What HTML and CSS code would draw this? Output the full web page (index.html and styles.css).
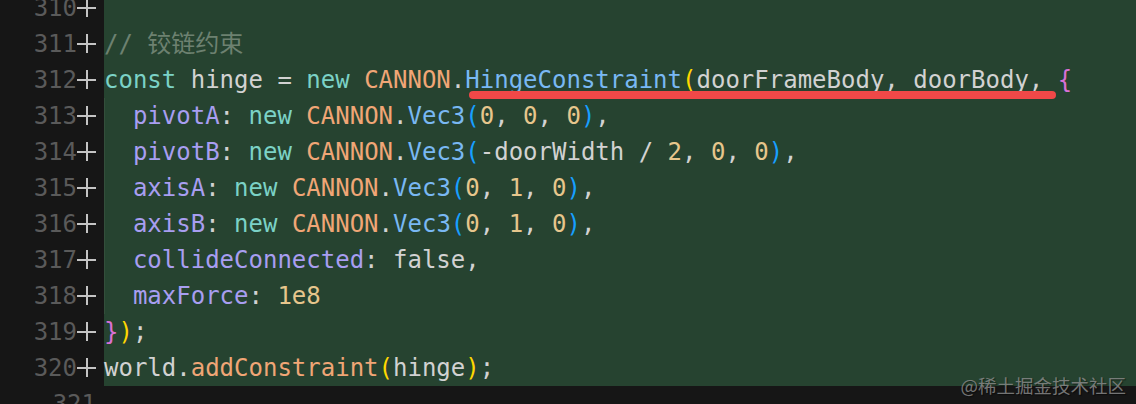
FILE: index.html
```html
<!DOCTYPE html>
<html lang="zh">
<head>
<meta charset="utf-8">
<title>diff</title>
<link rel="stylesheet" href="styles.css">
</head>
<body>
<div class="editor">
  <div class="line add"><div class="gutter"><span class="num">310</span><span class="plus"></span></div><div class="code"> </div></div>
  <div class="line add"><div class="gutter"><span class="num">311</span><span class="plus"></span></div><div class="code"><span class="cm">// 铰链约束</span></div></div>
  <div class="line add"><div class="gutter"><span class="num">312</span><span class="plus"></span></div><div class="code"><span class="kw">const</span> <span class="id">hinge</span> <span class="p">=</span> <span class="kw">new</span> <span class="ns">CANNON</span><span class="p">.</span><span class="marked"><span class="fn">HingeConstraint</span><span class="b1">(</span><span class="id">doorFrameBody</span><span class="p">,</span> <span class="id">doorBody</span><span class="p">,</span> </span><span class="b2">{</span></div></div>
  <div class="line add guide"><div class="gutter"><span class="num">313</span><span class="plus"></span></div><div class="code">  <span class="prop">pivotA</span><span class="p">:</span> <span class="kw">new</span> <span class="ns">CANNON</span><span class="p">.</span><span class="fn">Vec3</span><span class="b3">(</span><span class="nm">0</span><span class="p">,</span> <span class="nm">0</span><span class="p">,</span> <span class="nm">0</span><span class="b3">)</span><span class="p">,</span></div></div>
  <div class="line add guide"><div class="gutter"><span class="num">314</span><span class="plus"></span></div><div class="code">  <span class="prop">pivotB</span><span class="p">:</span> <span class="kw">new</span> <span class="ns">CANNON</span><span class="p">.</span><span class="fn">Vec3</span><span class="b3">(</span><span class="id">-doorWidth</span> <span class="p">/</span> <span class="nm">2</span><span class="p">,</span> <span class="nm">0</span><span class="p">,</span> <span class="nm">0</span><span class="b3">)</span><span class="p">,</span></div></div>
  <div class="line add guide"><div class="gutter"><span class="num">315</span><span class="plus"></span></div><div class="code">  <span class="prop">axisA</span><span class="p">:</span> <span class="kw">new</span> <span class="ns">CANNON</span><span class="p">.</span><span class="fn">Vec3</span><span class="b3">(</span><span class="nm">0</span><span class="p">,</span> <span class="nm">1</span><span class="p">,</span> <span class="nm">0</span><span class="b3">)</span><span class="p">,</span></div></div>
  <div class="line add guide"><div class="gutter"><span class="num">316</span><span class="plus"></span></div><div class="code">  <span class="prop">axisB</span><span class="p">:</span> <span class="kw">new</span> <span class="ns">CANNON</span><span class="p">.</span><span class="fn">Vec3</span><span class="b3">(</span><span class="nm">0</span><span class="p">,</span> <span class="nm">1</span><span class="p">,</span> <span class="nm">0</span><span class="b3">)</span><span class="p">,</span></div></div>
  <div class="line add guide"><div class="gutter"><span class="num">317</span><span class="plus"></span></div><div class="code">  <span class="prop">collideConnected</span><span class="p">:</span> <span class="id">false</span><span class="p">,</span></div></div>
  <div class="line add guide"><div class="gutter"><span class="num">318</span><span class="plus"></span></div><div class="code">  <span class="prop">maxForce</span><span class="p">:</span> <span class="nm">1e8</span></div></div>
  <div class="line add"><div class="gutter"><span class="num">319</span><span class="plus"></span></div><div class="code"><span class="b2">}</span><span class="b1">)</span><span class="p">;</span></div></div>
  <div class="line add"><div class="gutter"><span class="num">320</span><span class="plus"></span></div><div class="code"><span class="id">world</span><span class="p">.</span><span class="ns">addConstraint</span><span class="b1">(</span><span class="id">hinge</span><span class="b1">)</span><span class="p">;</span></div></div>
  <div class="line"><div class="gutter"><span class="num">321</span></div><div class="code"> </div></div>
  <div class="watermark">@稀土掘金技术社区</div>
</div>
</body>
</html>
```

FILE: styles.css
```css
html, body {
  margin: 0;
  padding: 0;
  background: #161616;
  overflow: hidden;
}

.editor {
  position: relative;
  width: 1136px;
  height: 404px;
  overflow: hidden;
  font-family: "DejaVu Sans Mono", "Noto Sans CJK SC", monospace;
  font-size: 24px;
  color: #d2d2d2;
}

.line {
  display: flex;
  height: 36px;
  line-height: 36px;
}

.line:first-child {
  margin-top: -10px;
}

.gutter {
  width: 104px;
  flex: 0 0 104px;
  display: flex;
  align-items: center;
  justify-content: flex-end;
  padding-right: 8px;
  box-sizing: border-box;
  background: #161616;
}

.num {
  color: #5a5a5a;
}

.plus {
  position: relative;
  width: 19px;
  height: 19px;
  margin-top: -2px;
}

.plus::before,
.plus::after {
  content: "";
  position: absolute;
  background: #c4c4c4;
}

.plus::before {
  left: 0;
  right: 0;
  top: 9px;
  height: 2px;
}

.plus::after {
  top: 0;
  bottom: 0;
  left: 9px;
  width: 2px;
}

.code {
  flex: 1;
  white-space: pre;
}

.add .code {
  background: #264330;
}

.guide .code {
  box-shadow: inset 1px 0 0 #334e3b;
}

.cm { color: #6d8170; }
.kw { color: #7bd2c6; }
.id { color: #d2d2d2; }
.p { color: #d2d2d2; }
.ns { color: #f0a676; }
.fn { color: #79b8f3; }
.prop { color: #a89ef1; }
.nm { color: #e6c68c; }
.b1 { color: #ffd700; }
.b2 { color: #da70d6; }
.b3 { color: #179fff; }

.marked {
  position: relative;
}

.marked::after {
  content: "";
  position: absolute;
  left: 4px;
  right: 2px;
  top: 25px;
  height: 8px;
  border-radius: 4px;
  background: #f04848;
}

.watermark {
  position: absolute;
  right: 10px;
  bottom: 8px;
  font-family: "Noto Sans CJK SC", sans-serif;
  font-size: 18.5px;
  line-height: 22px;
  color: #8c8c8c;
  text-shadow: 1px 1px 1px rgba(0, 0, 0, 0.6);
  opacity: 0.8;
}
```
